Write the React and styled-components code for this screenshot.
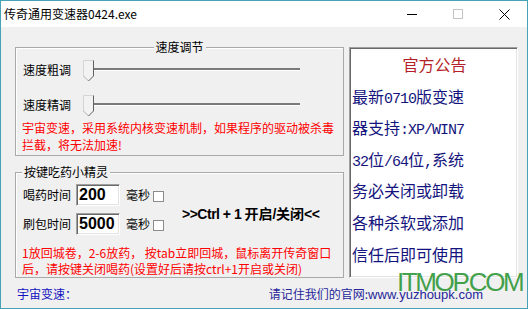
import React from "react";
import styled, { createGlobalStyle } from "styled-components";

const GlobalStyle = createGlobalStyle`
  html, body {
    margin: 0;
    padding: 0;
    background: #f0f0f0;
    overflow: hidden;
  }
  body {
    font-family: "Noto Sans CJK SC", "Liberation Sans", sans-serif;
    font-size: 12px;
  }
`;

const notice = [
  ["最新", "0710", "版变速"],
  ["器支持", ":XP/WIN7"],
  ["32", "位", "/64", "位", ",", "系统"],
  ["务必关闭或卸载"],
  ["各种杀软或添加"],
  ["信任后即可使用"],
];

function Thumb() {
  return (
    <svg width="11" height="22" viewBox="0 0 11 22">
      <polygon points="0.5,0.5 10.5,0.5 10.5,16 5.5,21 0.5,16" fill="#f2f2f2" />
      <polyline points="0.5,16 0.5,0.5 10.5,0.5" fill="none" stroke="#d4d4d4" />
      <polyline points="0.5,16 5.5,21" fill="none" stroke="#b0b0b0" />
      <polyline points="10.5,0.5 10.5,16 5.5,21" fill="none" stroke="#606060" />
    </svg>
  );
}

function SliderRow({ label }) {
  return (
    <Row>
      <RowLabel>{label}</RowLabel>
      <Slider>
        <Thumb />
        <Track />
      </Slider>
    </Row>
  );
}

function FieldRow({ label, value }) {
  return (
    <Field>
      <RowLabel>{label}</RowLabel>
      <TextBox readOnly defaultValue={value} />
      <Unit>毫秒</Unit>
      <Check />
    </Field>
  );
}

export default function App() {
  return (
    <>
      <GlobalStyle />
      <Window>
        <TitleBar>
          <Title>传奇通用变速器0424.exe</Title>
          <Caption>
            <svg width="10" height="10" viewBox="0 0 10 10">
              <line x1="0" y1="5.5" x2="10" y2="5.5" stroke="#000" />
            </svg>
          </Caption>
          <Caption>
            <svg width="10" height="10" viewBox="0 0 10 10">
              <rect x="0.5" y="0.5" width="9" height="9" fill="none" stroke="#c4c4c4" />
            </svg>
          </Caption>
          <Caption>
            <svg width="11" height="11" viewBox="0 0 11 11">
              <line x1="0.5" y1="0.5" x2="10.5" y2="10.5" stroke="#000" />
              <line x1="10.5" y1="0.5" x2="0.5" y2="10.5" stroke="#000" />
            </svg>
          </Caption>
        </TitleBar>

        <Client>
          <Main>
            <LeftCol>
              <GroupBox $h={109}>
                <GroupTitle $center>速度调节</GroupTitle>
                <GroupBody $pt={12}>
                  <SliderRow label="速度粗调" />
                  <SliderRow label="速度精调" />
                  <RedNote $lh={17} $mt={2}>
                    宇宙变速，采用系统内核变速机制，如果程序的驱动被杀毒
                    <br />
                    拦截，将无法加速!
                  </RedNote>
                </GroupBody>
              </GroupBox>

              <GroupBox $h={106}>
                <GroupTitle>按键吃药小精灵</GroupTitle>
                <GroupBody $pt={11}>
                  <PotionTop>
                    <Fields>
                      <FieldRow label="喝药时间" value="200" />
                      <FieldRow label="刷包时间" value="5000" />
                    </Fields>
                    <Hotkey>
                      <Ascii>&gt;&gt;Ctrl + 1 </Ascii>开启<Ascii>/</Ascii>关闭<Ascii>&lt;&lt;</Ascii>
                    </Hotkey>
                  </PotionTop>
                  <RedNote $lh={16} $mt={10}>
                    1放回城卷，2-6放药， 按tab立即回城，鼠标离开传奇窗口
                    <br />
                    后，请按键关闭喝药(设置好后请按ctrl+1开启或关闭)
                  </RedNote>
                </GroupBody>
              </GroupBox>
            </LeftCol>

            <Notice>
              <NoticeTitle>官方公告</NoticeTitle>
              {notice.map((parts, i) => (
                <NoticeLine key={i}>
                  {parts.map((p, j) =>
                    /^[\x00-\x7f]+$/.test(p) ? <Mono key={j}>{p}</Mono> : <span key={j}>{p}</span>
                  )}
                </NoticeLine>
              ))}
            </Notice>
          </Main>

          <StatusBar>
            <StatusLeft>宇宙变速：</StatusLeft>
            <StatusRight>
              请记住我们的官网:<Url>www.yuzhoupk.com</Url>
            </StatusRight>
          </StatusBar>
        </Client>

        <Watermark>ITMOP.COM</Watermark>
      </Window>
    </>
  );
}

const Window = styled.div`
  position: relative;
  width: 528px;
  height: 309px;
  box-sizing: border-box;
  border: 1px solid #47a2b8;
  background: #f0f0f0;
  display: flex;
  flex-direction: column;
  overflow: hidden;
`;

const TitleBar = styled.div`
  height: 26px;
  background: #fff;
  display: flex;
  align-items: center;
`;

const Title = styled.div`
  flex: 1;
  padding-left: 3px;
  font-size: 12px;
  line-height: 14px;
  color: #000;
`;

const Caption = styled.div`
  width: 46px;
  height: 26px;
  display: flex;
  align-items: center;
  justify-content: center;
`;

const Client = styled.div`
  flex: 1;
  display: flex;
  flex-direction: column;
  padding: 20px 9px 0 14px;
`;

const Main = styled.div`
  display: flex;
  gap: 5px;
  height: 231px;
`;

const LeftCol = styled.div`
  width: 329px;
  display: flex;
  flex-direction: column;
  gap: 16px;
`;

const GroupBox = styled.div`
  position: relative;
  box-sizing: border-box;
  height: ${(p) => p.$h}px;
  border: 1px solid #a9a9a9;
  box-shadow: inset 1px 1px 0 #fff;
`;

const GroupTitle = styled.div`
  position: absolute;
  top: -8px;
  left: ${(p) => (p.$center ? "50%" : "6px")};
  transform: ${(p) => (p.$center ? "translateX(-50%)" : "none")};
  padding: 0 2px;
  background: #f0f0f0;
  line-height: 14px;
  color: #000;
  white-space: nowrap;
`;

const GroupBody = styled.div`
  padding: ${(p) => p.$pt}px 0 0 7px;
  display: flex;
  flex-direction: column;
`;

const Row = styled.div`
  display: flex;
  align-items: flex-start;
  height: 22px;

  & + & {
    margin-top: 13px;
  }
`;

const RowLabel = styled.div`
  width: 48px;
  flex: none;
  line-height: 20px;
  color: #000;
  white-space: nowrap;
`;

const Slider = styled.div`
  display: flex;
  align-items: flex-start;
  width: 217px;
  margin-left: 12px;
`;

const Track = styled.div`
  flex: 1;
  height: 2px;
  margin-top: 8px;
  background: #7a7a7a;
  box-shadow: 0 1px 0 #fff;
`;

const RedNote = styled.div`
  margin-top: ${(p) => p.$mt}px;
  margin-left: -1px;
  color: #f00;
  line-height: ${(p) => p.$lh}px;
  white-space: nowrap;
`;

const PotionTop = styled.div`
  display: flex;
  align-items: flex-start;
`;

const Fields = styled.div`
  display: flex;
  flex-direction: column;
  gap: 7px;
`;

const Field = styled.div`
  display: flex;
  align-items: center;
  height: 22px;
`;

const TextBox = styled.input`
  width: 44px;
  height: 22px;
  box-sizing: border-box;
  margin: 0 0 0 5px;
  padding: 0 0 0 2px;
  border: 1px solid;
  border-color: #a0a0a0 #fff #fff #a0a0a0;
  box-shadow: inset 1px 1px 0 #696969, inset -1px -1px 0 #e3e3e3;
  background: #fff;
  font: bold 16px "Liberation Sans", sans-serif;
  color: #000;
  outline: none;
`;

const Unit = styled.span`
  margin-left: 6px;
  line-height: 20px;
  color: #000;
`;

const Check = styled.span`
  width: 11px;
  height: 11px;
  box-sizing: border-box;
  margin: 3px 0 0 3px;
  border: 1px solid #8c8c8c;
  background: #fff;
`;

const Hotkey = styled.div`
  margin: 20px 0 0 18px;
  font-family: "Noto Sans CJK SC", sans-serif;
  font-weight: bold;
  font-size: 14px;
  line-height: 18px;
  color: #000;
  white-space: nowrap;
`;

const Ascii = styled.span`
  font-family: "Liberation Sans", sans-serif;
  letter-spacing: -0.5px;
`;

const Notice = styled.div`
  width: 169px;
  height: 231px;
  box-sizing: border-box;
  padding: 1px 0 0 2px;
  background: #fff;
  border: 1px solid;
  border-color: #a0a0a0 #fff #fff #a0a0a0;
  box-shadow: inset 1px 1px 0 #696969, inset -1px -1px 0 #e3e3e3;
  font-size: 16px;
`;

const NoticeTitle = styled.div`
  height: 31.6px;
  line-height: 31px;
  text-align: center;
  color: #b51e28;
`;

const NoticeLine = styled.div`
  height: 31.6px;
  line-height: 31px;
  color: #14147e;
  white-space: nowrap;
`;

const Mono = styled.span`
  font-family: "Liberation Mono", monospace;
  font-size: 15px;
  line-height: 1;
  letter-spacing: -1px;
`;

const StatusBar = styled.div`
  flex: 1;
  display: flex;
  align-items: center;
  padding: 2px 35px 0 2px;
  line-height: 16px;
`;

const StatusLeft = styled.span`
  color: #1414c0;
`;

const StatusRight = styled.span`
  margin-left: auto;
  color: #26269a;
`;

const Url = styled.span`
  font-family: "Liberation Sans", sans-serif;
  font-size: 13px;
`;

const Watermark = styled.div`
  position: absolute;
  left: 396px;
  top: 268px;
  font-family: "Liberation Sans", sans-serif;
  font-size: 26px;
  line-height: 26px;
  letter-spacing: -2.4px;
  color: rgba(34, 145, 44, 0.85);
  pointer-events: none;
`;
